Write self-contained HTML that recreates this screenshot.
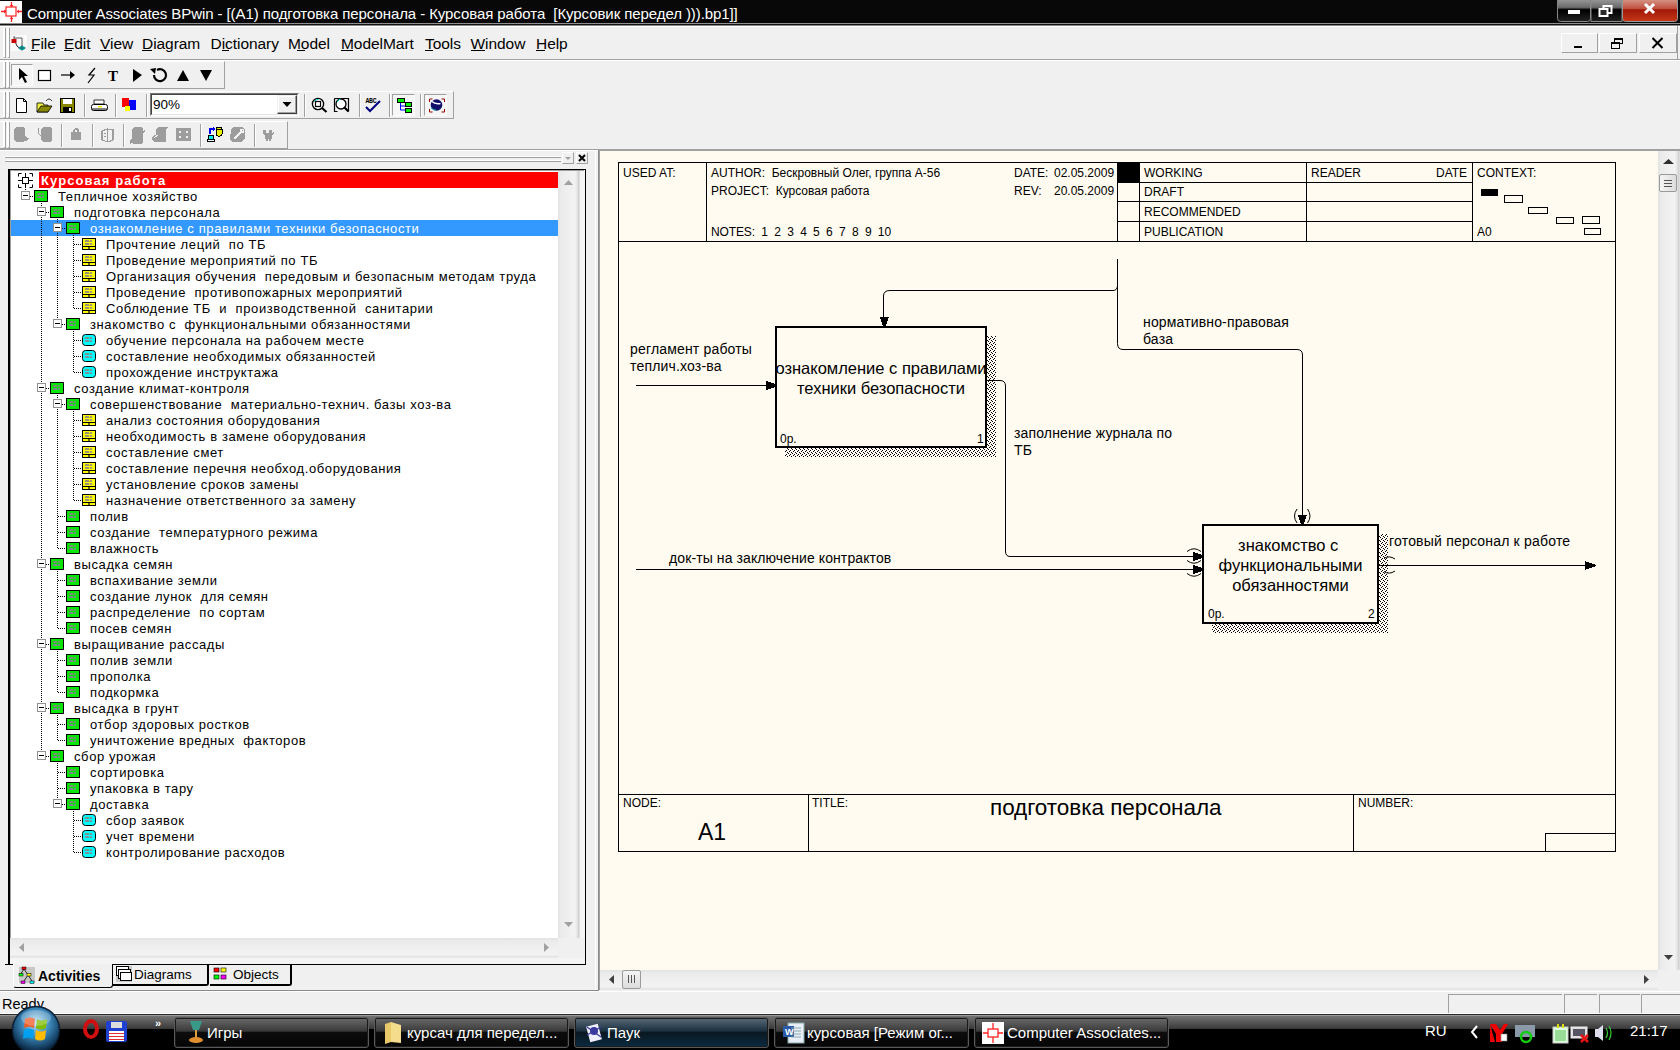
<!DOCTYPE html>
<html><head><meta charset="utf-8">
<style>
*{margin:0;padding:0;box-sizing:border-box}
html,body{width:1680px;height:1050px;overflow:hidden;background:#f0f0f0;font-family:"Liberation Sans",sans-serif}
.abs{position:absolute}
.t{position:absolute;white-space:pre;line-height:1}
</style></head><body>
<div class="abs" style="left:0;top:0;width:1680px;height:1050px;overflow:hidden">

<div class="abs" style="left:0;top:0;width:1680px;height:23px;background:#080808"></div>
<div class="abs" style="left:0;top:23px;width:1680px;height:1px;background:#909090"></div>
<div class="abs" style="left:0;top:24px;width:1680px;height:1px;background:#111"></div>
<div class="abs" style="left:0;top:25px;width:1680px;height:1px;background:#888"></div>
<div class="abs" style="left:0;top:26px;width:1680px;height:1px;background:#fff"></div>
<svg class="abs" style="left:0;top:0" width="23" height="23" viewBox="0 0 23 23">
<rect x="0" y="1" width="22" height="22" fill="#fff"/>
<rect x="6" y="7" width="10" height="9" fill="none" stroke="#f33" stroke-width="1.3"/>
<path d="M11.5 2v5M1 11.5h5M17 11.5h5M11.5 16v6" stroke="#f22" stroke-width="1.3"/>
<path d="M9.5 5l2 2 2-2zM4 9.5l2 2-2 2zM19 9.5l-2 2 2 2zM9.5 19l2-2 2 2z" fill="#f22"/>
</svg>
<div class="t" style="left:27px;top:5.5px;font-size:15px;letter-spacing:-0.08px;color:#fff">Computer Associates BPwin - [(A1) подготовка персонала - Курсовая работа  [Курсовик передел ))).bp1]]</div>
<svg class="abs" style="left:1556px;top:0" width="124" height="23" viewBox="0 0 124 23">
<defs>
<linearGradient id="cbg" x1="0" y1="0" x2="0" y2="1"><stop offset="0" stop-color="#a0a0a0"/><stop offset="0.4" stop-color="#6a6a6a"/><stop offset="0.5" stop-color="#000"/><stop offset="1" stop-color="#222"/></linearGradient>
<linearGradient id="cbr" x1="0" y1="0" x2="0" y2="1"><stop offset="0" stop-color="#d9a090"/><stop offset="0.45" stop-color="#c05040"/><stop offset="0.5" stop-color="#a01808"/><stop offset="1" stop-color="#c83818"/></linearGradient>
</defs>
<rect x="1.5" y="-2" width="33" height="23.5" rx="3" fill="url(#cbg)" stroke="#888" stroke-width="1"/>
<rect x="35" y="-2" width="31" height="23.5" fill="url(#cbg)" stroke="#888" stroke-width="1"/>
<rect x="66.5" y="-2" width="55" height="23.5" rx="3" fill="url(#cbr)" stroke="#999" stroke-width="1"/>
<rect x="12" y="10" width="12" height="4" fill="#fff"/>
<rect x="47.5" y="6" width="8" height="7" fill="none" stroke="#fff" stroke-width="2"/>
<rect x="43.5" y="9" width="8" height="7" fill="#2a2a2a" stroke="#fff" stroke-width="2"/>
<path d="M89 4l9 9M98 4l-9 9" stroke="#fff" stroke-width="3"/>
</svg>
<div class="abs" style="left:0;top:59px;width:1680px;height:1px;background:#a0a0a0"></div>
<div class="abs" style="left:3px;top:28px;width:3px;height:30px;border-left:2px solid #fff;border-right:1px solid #a0a0a0;border-bottom:1px solid #a0a0a0"></div><div class="abs" style="left:7px;top:28px;width:3px;height:30px;border-left:2px solid #fff;border-right:1px solid #a0a0a0;border-bottom:1px solid #a0a0a0"></div>
<svg class="abs" style="left:10px;top:34px" width="18" height="18" viewBox="0 0 18 18">
<rect x="1" y="1" width="16" height="16" fill="#fafafa"/>
<path d="M4 2v5M4 4h8v10" stroke="#333" stroke-width="0.8" fill="none"/>
<path d="M4 7q2 2 3 5q1 2 5 2" stroke="#222" stroke-width="1" fill="none"/>
<rect x="1.5" y="5" width="5" height="4" fill="#c00"/>
<ellipse cx="12" cy="14" rx="3" ry="2" fill="#0bb"/>
<path d="M8 14h8M12 11v6" stroke="#333" stroke-width="0.6"/>
</svg>
<div class="t" style="left:31px;top:35.5px;font-size:15.5px;letter-spacing:-0.05px;color:#000">File</div>
<div class="t" style="left:64px;top:35.5px;font-size:15.5px;letter-spacing:-0.05px;color:#000">Edit</div>
<div class="t" style="left:100px;top:35.5px;font-size:15.5px;letter-spacing:-0.05px;color:#000">View</div>
<div class="t" style="left:142px;top:35.5px;font-size:15.5px;letter-spacing:-0.05px;color:#000">Diagram</div>
<div class="t" style="left:210.5px;top:35.5px;font-size:15.5px;letter-spacing:-0.05px;color:#000">Dictionary</div>
<div class="t" style="left:288px;top:35.5px;font-size:15.5px;letter-spacing:-0.05px;color:#000">Model</div>
<div class="t" style="left:341px;top:35.5px;font-size:15.5px;letter-spacing:-0.05px;color:#000">ModelMart</div>
<div class="t" style="left:425px;top:35.5px;font-size:15.5px;letter-spacing:-0.05px;color:#000">Tools</div>
<div class="t" style="left:470.5px;top:35.5px;font-size:15.5px;letter-spacing:-0.05px;color:#000">Window</div>
<div class="t" style="left:536px;top:35.5px;font-size:15.5px;letter-spacing:-0.05px;color:#000">Help</div>
<div class="abs" style="left:31px;top:50px;width:8px;height:1px;background:#000"></div>
<div class="abs" style="left:64px;top:50px;width:8px;height:1px;background:#000"></div>
<div class="abs" style="left:100px;top:50px;width:10px;height:1px;background:#000"></div>
<div class="abs" style="left:142px;top:50px;width:10px;height:1px;background:#000"></div>
<div class="abs" style="left:222px;top:50px;width:7px;height:1px;background:#000"></div>
<div class="abs" style="left:297px;top:50px;width:8px;height:1px;background:#000"></div>
<div class="abs" style="left:341px;top:50px;width:12px;height:1px;background:#000"></div>
<div class="abs" style="left:425px;top:50px;width:8px;height:1px;background:#000"></div>
<div class="abs" style="left:471px;top:50px;width:14px;height:1px;background:#000"></div>
<div class="abs" style="left:536px;top:50px;width:9px;height:1px;background:#000"></div>
<div class="abs" style="left:1561px;top:33px;width:37px;height:20px;border:1px solid;border-color:#fff #a0a0a0 #a0a0a0 #fff;background:#f0f0f0"></div><svg class="abs" style="left:1561px;top:33px" width="37" height="20" viewBox="0 0 37 20"><rect x="13" y="13" width="8" height="2" fill="#000"/></svg>
<div class="abs" style="left:1599px;top:33px;width:38px;height:20px;border:1px solid;border-color:#fff #a0a0a0 #a0a0a0 #fff;background:#f0f0f0"></div><svg class="abs" style="left:1599px;top:33px" width="38" height="20" viewBox="0 0 38 20"><rect x="15.5" y="5.5" width="8" height="5" fill="none" stroke="#000" stroke-width="1"/><rect x="15.5" y="5.5" width="8" height="1.5" fill="#000"/><rect x="12.5" y="9.5" width="8" height="6" fill="#f0f0f0" stroke="#000" stroke-width="1"/><rect x="12.5" y="9.5" width="8" height="1.5" fill="#000"/></svg>
<div class="abs" style="left:1639px;top:33px;width:38px;height:20px;border:1px solid;border-color:#fff #a0a0a0 #a0a0a0 #fff;background:#f0f0f0"></div><svg class="abs" style="left:1639px;top:33px" width="38" height="20" viewBox="0 0 38 20"><path d="M13.5 5l10 10M23.5 5l-10 10" stroke="#000" stroke-width="2"/></svg>
<div class="abs" style="left:1677px;top:26px;width:1px;height:33px;background:#a0a0a0"></div>
<div class="abs" style="left:0;top:149px;width:1680px;height:1px;background:#a0a0a0"></div>
<div class="abs" style="left:0;top:150px;width:1680px;height:1px;background:#fff"></div>
<div class="abs" style="left:0;top:60px;width:1680px;height:1px;background:#fff"></div>
<div class="abs" style="left:0px;top:61px;width:225px;height:28px;border-right:1px solid #a0a0a0;border-bottom:1px solid #a0a0a0;border-top:1px solid #fff"></div>
<div class="abs" style="left:0px;top:91px;width:454px;height:28px;border-right:1px solid #a0a0a0;border-bottom:1px solid #a0a0a0;border-top:1px solid #fff"></div>
<div class="abs" style="left:0px;top:121px;width:288px;height:28px;border-right:1px solid #a0a0a0;border-bottom:1px solid #a0a0a0;border-top:1px solid #fff"></div>
<div class="abs" style="left:3px;top:62px;width:3px;height:26px;border-left:2px solid #fff;border-right:1px solid #a0a0a0;border-bottom:1px solid #a0a0a0"></div><div class="abs" style="left:7px;top:62px;width:3px;height:26px;border-left:2px solid #fff;border-right:1px solid #a0a0a0;border-bottom:1px solid #a0a0a0"></div>
<div class="abs" style="left:3px;top:92px;width:3px;height:26px;border-left:2px solid #fff;border-right:1px solid #a0a0a0;border-bottom:1px solid #a0a0a0"></div><div class="abs" style="left:7px;top:92px;width:3px;height:26px;border-left:2px solid #fff;border-right:1px solid #a0a0a0;border-bottom:1px solid #a0a0a0"></div>
<div class="abs" style="left:3px;top:122px;width:3px;height:26px;border-left:2px solid #fff;border-right:1px solid #a0a0a0;border-bottom:1px solid #a0a0a0"></div><div class="abs" style="left:7px;top:122px;width:3px;height:26px;border-left:2px solid #fff;border-right:1px solid #a0a0a0;border-bottom:1px solid #a0a0a0"></div>
<div class="abs" style="left:11px;top:64px;width:22px;height:22px;border:1px solid;border-color:#a0a0a0 #fff #fff #a0a0a0;background:#f6f6f6"></div>
<svg class="abs" style="left:0;top:60px" width="230" height="30" viewBox="0 0 230 30">
<path d="M19 8l0 12 3-3 3 6 2-1-3-6 4 0z" fill="#000"/>
<rect x="38.5" y="10.5" width="12" height="10" fill="#fff" stroke="#000" stroke-width="1.2"/>
<path d="M61 15h10" stroke="#000" stroke-width="1.2"/><path d="M70 11l5 4-5 4z" fill="#000"/>
<path d="M95 8l-6 7h5l-6 8" stroke="#000" stroke-width="1.2" fill="none"/>
<text x="108" y="21" font-family="Liberation Serif" font-size="15" font-weight="bold">T</text>
<path d="M133 9l9 6-9 7z" fill="#000"/>
<path d="M157 10a6 6 0 1 1-3 5" stroke="#000" stroke-width="2.2" fill="none"/><path d="M150 9l6-1-1 6z" fill="#000"/>
<path d="M177 21l6-11 6 11z" fill="#000"/>
<path d="M200 10l6 11 6-11z" fill="#000"/>
</svg>
<div class="abs" style="left:84px;top:94px;width:2px;height:23px;border-left:1px solid #a0a0a0;border-right:1px solid #fff"></div>
<div class="abs" style="left:115px;top:94px;width:2px;height:23px;border-left:1px solid #a0a0a0;border-right:1px solid #fff"></div>
<div class="abs" style="left:146px;top:94px;width:2px;height:23px;border-left:1px solid #a0a0a0;border-right:1px solid #fff"></div>
<div class="abs" style="left:304px;top:94px;width:2px;height:23px;border-left:1px solid #a0a0a0;border-right:1px solid #fff"></div>
<div class="abs" style="left:359px;top:94px;width:2px;height:23px;border-left:1px solid #a0a0a0;border-right:1px solid #fff"></div>
<div class="abs" style="left:389px;top:94px;width:2px;height:23px;border-left:1px solid #a0a0a0;border-right:1px solid #fff"></div>
<div class="abs" style="left:420px;top:94px;width:2px;height:23px;border-left:1px solid #a0a0a0;border-right:1px solid #fff"></div>
<div class="abs" style="left:392px;top:94px;width:23px;height:22px;border:1px solid;border-color:#a0a0a0 #fff #fff #a0a0a0;background:#f6f6f6"></div>
<div class="abs" style="left:424px;top:94px;width:23px;height:22px;border:1px solid;border-color:#a0a0a0 #fff #fff #a0a0a0;background:#f6f6f6"></div>
<svg class="abs" style="left:0;top:90px" width="460" height="30" viewBox="0 0 460 30">
<path d="M16.5 8.5h7l3 3v11h-10z" fill="#fff" stroke="#000" stroke-width="1"/><path d="M23.5 8.5v3h3" fill="none" stroke="#000" stroke-width="1"/>
<path d="M37 13h6l1 2h4v7h-11z" fill="#ee4" stroke="#000" stroke-width="0.8"/><path d="M37 22l4-6h11l-4 6z" fill="#880" stroke="#000" stroke-width="0.8"/><path d="M46 11q3-4 6 0" stroke="#000" fill="none" stroke-width="0.8"/>
<rect x="60.5" y="8.5" width="14" height="14" fill="#880" stroke="#000"/><rect x="63" y="9" width="9" height="5" fill="#fff"/><rect x="63" y="17" width="9" height="5" fill="#000"/><rect x="69" y="18" width="2" height="3" fill="#fff"/>
<path d="M94 10h10v4h-10z" fill="#fff" stroke="#000" stroke-width="0.8"/><rect x="91.5" y="14.5" width="16" height="6" rx="2" fill="#fff" stroke="#000"/><path d="M92 19h15" stroke="#000"/><rect x="98" y="16" width="4" height="1.5" fill="#ee0"/>
<rect x="122" y="8" width="7" height="9" fill="#f00"/><rect x="129" y="10" width="7" height="10" fill="#00f"/><rect x="125" y="16" width="5" height="5" fill="#ff0"/>
<circle cx="318" cy="14" r="5.6" fill="#fff" stroke="#000" stroke-width="1.4"/><path d="M314.5 11.5a4 4 0 0 1 4-2" stroke="#0dd" stroke-width="1" fill="none"/><rect x="315.5" y="11.5" width="5" height="5" fill="none" stroke="#000" stroke-width="1.2"/><path d="M322 18l4.5 4" stroke="#000" stroke-width="2.2"/>
<path d="M334.5 8.5h14v13M334.5 8.5v13h3" stroke="#000" stroke-width="1.2" fill="none"/><circle cx="341" cy="14" r="5" fill="#fff" stroke="#000" stroke-width="1.3"/><path d="M337.5 12a4 4 0 0 1 3-3" stroke="#0dd" stroke-width="1" fill="none"/><path d="M344 17l4.5 4.5" stroke="#000" stroke-width="2.2"/>
<text x="365.5" y="13" font-family="Liberation Mono" font-size="6.5" font-weight="bold" fill="#000" letter-spacing="-0.3">ABC</text><path d="M366 17l4 4l10-10" stroke="#000080" stroke-width="2" fill="none"/>
<path d="M400.5 13v7h5M400.5 16h5" stroke="#00f" fill="none" stroke-width="1"/><rect x="397.5" y="8.5" width="7" height="4" fill="#0e0" stroke="#000" stroke-width="1"/><rect x="405.5" y="12.5" width="6" height="4" fill="#0e0" stroke="#000" stroke-width="1"/><rect x="405.5" y="18.5" width="6" height="4" fill="#0e0" stroke="#000" stroke-width="1"/>
<path d="M429.5 12v-3h3M441.5 9h3v3M444.5 19v3h-3M432.5 22h-3v-3" stroke="#900" stroke-width="1" fill="none"/><circle cx="436.5" cy="15" r="5.8" fill="#10106a"/><path d="M432 11.5q3 3 8.5 2" stroke="#fff" stroke-width="1.5" fill="none"/><path d="M431 18q2 2 5 2" stroke="#2aa" stroke-width="1" fill="none"/>
</svg>
<div class="abs" style="left:150px;top:93px;width:149px;height:23px;border:1px solid;border-color:#7a7a7a #fff #fff #7a7a7a;background:#fff"></div>
<div class="abs" style="left:151px;top:94px;width:147px;height:21px;border:1px solid;border-color:#404040 #e3e3e3 #e3e3e3 #404040"></div>
<div class="t" style="left:153px;top:97.5px;font-size:13.5px;color:#000">90%</div>
<div class="abs" style="left:277px;top:95px;width:20px;height:19px;border:1px solid;border-color:#f0f0f0 #404040 #404040 #f0f0f0;background:#f0f0f0;box-shadow:inset -1px -1px 0 #a0a0a0, inset 1px 1px 0 #fff"></div>
<svg class="abs" style="left:277px;top:95px" width="20" height="19"><path d="M5.5 7h9l-4.5 5z" fill="#000"/></svg>
<div class="abs" style="left:61px;top:124px;width:2px;height:23px;border-left:1px solid #a0a0a0;border-right:1px solid #fff"></div>
<div class="abs" style="left:92px;top:124px;width:2px;height:23px;border-left:1px solid #a0a0a0;border-right:1px solid #fff"></div>
<div class="abs" style="left:123px;top:124px;width:2px;height:23px;border-left:1px solid #a0a0a0;border-right:1px solid #fff"></div>
<div class="abs" style="left:200px;top:124px;width:2px;height:23px;border-left:1px solid #a0a0a0;border-right:1px solid #fff"></div>
<div class="abs" style="left:254px;top:124px;width:2px;height:23px;border-left:1px solid #a0a0a0;border-right:1px solid #fff"></div>
<svg class="abs" style="left:0;top:120px" width="300" height="30" viewBox="0 0 300 30" shape-rendering="crispEdges">
<g fill="#9d9d9d">
<path d="M16 7h7l2 2v11l-2 2h-7l-2-2v-11z"/><path d="M25 15l2 3h2l-3 3h-1z"/>
<path d="M43 7h7l2 2v11l-2 2h-7l-2-2v-11z"/>
<path d="M71 12h10v8h-10z"/><path d="M73 12v-2l2-2h2l2 2v2h-2v-2h-2v2z"/>
<path d="M130 20l2-2v-9l2-2h7l2 2v2l2-2v2l-2 2v9l-2 2h-7l-2-1-2 1z"/>
<path d="M156 9l2-2h10l-2 3v12h-11l-3-2v-3l2-2h2z"/>
<path d="M176 8h15v13h-15z"/>
<path d="M231 9l2-2h9l3 3v8l-4 4h-9l-2-2z"/>
<path d="M263 10h3v3h3v-3h3v3l2-1v2l-2 1v4h-1v2h-2v-2h-1v2h-2v-2h-1v-4l-2-1v-2z"/>
</g>
<path d="M38 8v5l2 2h2" stroke="#9d9d9d" stroke-width="1" fill="none"/>
<rect x="75" y="10" width="2" height="2" fill="#f0f0f0"/>
<path d="M102 11l5-2 6 1v10l-5 2-6-2z" fill="#f0f0f0" stroke="#9d9d9d" stroke-width="1.2"/><path d="M107 9v12M104 13h2M104 16h2" stroke="#9d9d9d"/>
<path d="M154 18l4-3" stroke="#f0f0f0" stroke-width="1"/>
<rect x="179" y="11" width="2" height="2" fill="#f0f0f0"/><rect x="186" y="11" width="2" height="2" fill="#f0f0f0"/><rect x="179" y="16" width="2" height="2" fill="#f0f0f0"/><rect x="186" y="16" width="2" height="2" fill="#f0f0f0"/>
<path d="M234 19l8-8" stroke="#f4f4f4" stroke-width="1.5"/><circle cx="242" cy="11" r="2" fill="none" stroke="#f4f4f4"/>
<rect x="216" y="7" width="6" height="9" rx="2" fill="#ee0" stroke="#000" stroke-width="1"/><path d="M216 9h6" stroke="#000"/>
<path d="M210 14v-5h4" stroke="#0000ee" stroke-width="2" fill="none"/><path d="M213 7l3 2-3 2z" fill="#0000ee"/>
<rect x="208.5" y="15.5" width="5" height="4" fill="#0ee" stroke="#000" stroke-width="1"/><rect x="207.5" y="19.5" width="7" height="2" fill="#fff" stroke="#000" stroke-width="1"/>
</svg>
<div class="abs" style="left:5px;top:156px;width:556px;height:2px;border-top:1px solid #fff;border-bottom:1px solid #a0a0a0"></div>
<div class="abs" style="left:5px;top:160px;width:556px;height:2px;border-top:1px solid #fff;border-bottom:1px solid #a0a0a0"></div>
<div class="abs" style="left:562px;top:152px;width:12px;height:12px;border:1px solid;border-color:#fff #a0a0a0 #a0a0a0 #fff"></div>
<svg class="abs" style="left:562px;top:152px" width="12" height="12"><path d="M3 5h6l-3 3z" fill="#a0a0a0"/></svg>
<div class="abs" style="left:576px;top:152px;width:12px;height:12px;border:1px solid;border-color:#fff #a0a0a0 #a0a0a0 #fff"></div>
<svg class="abs" style="left:576px;top:152px" width="12" height="12"><path d="M3 3l6 6M9 3l-6 6" stroke="#000" stroke-width="2"/></svg>
<div class="abs" style="left:595px;top:151px;width:1px;height:839px;background:#fff"></div>
<div class="abs" style="left:598px;top:150px;width:1px;height:840px;background:#8a8a8a"></div>
<div class="abs" style="left:8px;top:169px;width:578px;height:796px;border:1px solid #000;border-left-width:2px"></div>
<div class="abs" style="left:10px;top:170px;width:574px;height:794px;border-top:1px solid #a0a0a0;border-left:1px solid #a0a0a0"></div>
<div class="abs" style="left:11px;top:171px;width:547px;height:767px;background:#fff"></div>
<div class="abs" style="left:558px;top:171px;width:22px;height:767px;background:linear-gradient(to right,#e2e2e2 0px,#ebebeb 3px,#efefef 10px,#f3f3f3 17px,#dcdcdc 20px,#c8c8c8 21px,#f0f0f0 22px)"></div>
<div class="abs" style="left:580px;top:171px;width:5px;height:767px;background:#f4f4f4"></div>
<svg class="abs" style="left:558px;top:171px" width="22" height="20"><path d="M6 14h9l-4.5-5z" fill="#a0a0a0"/></svg>
<svg class="abs" style="left:558px;top:915px" width="22" height="20"><path d="M6 7h9l-4.5 5z" fill="#a0a0a0"/></svg>
<div class="abs" style="left:10px;top:938px;width:548px;height:20px;background:linear-gradient(to bottom,#e2e2e2 0px,#ebebeb 3px,#efefef 10px,#f3f3f3 17px,#e0e0e0 19px,#f0f0f0 20px)"></div>
<div class="abs" style="left:10px;top:958px;width:575px;height:6px;background:#f4f4f4"></div>
<div class="abs" style="left:558px;top:938px;width:27px;height:20px;background:#f0f0f0"></div>
<svg class="abs" style="left:10px;top:938px" width="22" height="20"><path d="M14 5v9l-5-4.5z" fill="#a0a0a0"/></svg>
<svg class="abs" style="left:536px;top:938px" width="22" height="20"><path d="M8 5v9l5-4.5z" fill="#a0a0a0"/></svg>
<div class="abs" style="left:39px;top:172px;width:519px;height:16px;background:#ff0000"></div>
<div class="abs" style="left:11px;top:220px;width:547px;height:16px;background:#3399ff"></div>
<svg class="abs" style="left:0;top:0" width="560" height="940"><g stroke="#000" stroke-width="1" stroke-dasharray="1 1" fill="none"><path d="M26 196.5H34" /><path d="M42 212.5H50" /><path d="M58 228.5H66" /><path d="M74 244.5H82" /><path d="M74 260.5H82" /><path d="M74 276.5H82" /><path d="M74 292.5H82" /><path d="M74 308.5H82" /><path d="M58 324.5H66" /><path d="M74 340.5H82" /><path d="M74 356.5H82" /><path d="M74 372.5H82" /><path d="M42 388.5H50" /><path d="M58 404.5H66" /><path d="M74 420.5H82" /><path d="M74 436.5H82" /><path d="M74 452.5H82" /><path d="M74 468.5H82" /><path d="M74 484.5H82" /><path d="M74 500.5H82" /><path d="M58 516.5H66" /><path d="M58 532.5H66" /><path d="M58 548.5H66" /><path d="M42 564.5H50" /><path d="M58 580.5H66" /><path d="M58 596.5H66" /><path d="M58 612.5H66" /><path d="M58 628.5H66" /><path d="M42 644.5H50" /><path d="M58 660.5H66" /><path d="M58 676.5H66" /><path d="M58 692.5H66" /><path d="M42 708.5H50" /><path d="M58 724.5H66" /><path d="M58 740.5H66" /><path d="M42 756.5H50" /><path d="M58 772.5H66" /><path d="M58 788.5H66" /><path d="M58 804.5H66" /><path d="M74 820.5H82" /><path d="M74 836.5H82" /><path d="M74 852.5H82" /><path d="M25.5 187V196" /><path d="M41.5 203V756" /><path d="M57.5 219V324" /><path d="M73.5 235V308" /><path d="M73.5 331V372" /><path d="M57.5 395V548" /><path d="M73.5 411V500" /><path d="M57.5 571V628" /><path d="M57.5 651V692" /><path d="M57.5 715V740" /><path d="M57.5 763V804" /><path d="M73.5 811V852" /></g>
<g transform="translate(18 173)" fill="none" stroke="#000" stroke-width="1"><path d="M0.5 3.5v-3h3M11.5 0.5h3v3M14.5 11.5v3h-3M3.5 14.5h-3v-3"/><rect x="4.5" y="4.5" width="6" height="6"/><path d="M7.5 0v4M7.5 11v4M0 7.5h4M11 7.5h4"/></g>
<rect x="21.5" y="191.5" width="8" height="8" fill="#fff" stroke="#919191"/><path d="M23 195.5h5" stroke="#000"/>
<rect x="34.5" y="190.5" width="13" height="11" fill="#00e600" stroke="#000"/><path d="M37 195l1 -2l1 2l1 -2l1 2M42 195l1 -2l1 2M37 198l1 -2l1 2l1 -2l1 2M42 198l1 -2l1 2" stroke="#9a70a0" stroke-width="0.9" fill="none"/>
<rect x="37.5" y="207.5" width="8" height="8" fill="#fff" stroke="#919191"/><path d="M39 211.5h5" stroke="#000"/>
<rect x="50.5" y="206.5" width="13" height="11" fill="#00e600" stroke="#000"/><path d="M53 211l1 -2l1 2l1 -2l1 2M58 211l1 -2l1 2M53 214l1 -2l1 2l1 -2l1 2M58 214l1 -2l1 2" stroke="#9a70a0" stroke-width="0.9" fill="none"/>
<rect x="53.5" y="223.5" width="8" height="8" fill="#fff" stroke="#919191"/><path d="M55 227.5h5" stroke="#000"/>
<rect x="66.5" y="222.5" width="13" height="11" fill="#00e600" stroke="#000"/><path d="M69 227l1 -2l1 2l1 -2l1 2M74 227l1 -2l1 2M69 230l1 -2l1 2l1 -2l1 2M74 230l1 -2l1 2" stroke="#9a70a0" stroke-width="0.9" fill="none"/>
<rect x="82.5" y="238.5" width="13" height="11" fill="#ffff00" stroke="#000"/><path d="M83 246.5h12M89 246v3" stroke="#000" stroke-width="1.2"/><path d="M85 242l1 -2l1 2l1 -2l1 2M90 242l1 -2l1 2M85 245l1 -2l1 2l1 -2l1 2M90 245l1 -2l1 2" stroke="#8070a0" stroke-width="0.9" fill="none"/>
<rect x="82.5" y="254.5" width="13" height="11" fill="#ffff00" stroke="#000"/><path d="M83 262.5h12M89 262v3" stroke="#000" stroke-width="1.2"/><path d="M85 258l1 -2l1 2l1 -2l1 2M90 258l1 -2l1 2M85 261l1 -2l1 2l1 -2l1 2M90 261l1 -2l1 2" stroke="#8070a0" stroke-width="0.9" fill="none"/>
<rect x="82.5" y="270.5" width="13" height="11" fill="#ffff00" stroke="#000"/><path d="M83 278.5h12M89 278v3" stroke="#000" stroke-width="1.2"/><path d="M85 274l1 -2l1 2l1 -2l1 2M90 274l1 -2l1 2M85 277l1 -2l1 2l1 -2l1 2M90 277l1 -2l1 2" stroke="#8070a0" stroke-width="0.9" fill="none"/>
<rect x="82.5" y="286.5" width="13" height="11" fill="#ffff00" stroke="#000"/><path d="M83 294.5h12M89 294v3" stroke="#000" stroke-width="1.2"/><path d="M85 290l1 -2l1 2l1 -2l1 2M90 290l1 -2l1 2M85 293l1 -2l1 2l1 -2l1 2M90 293l1 -2l1 2" stroke="#8070a0" stroke-width="0.9" fill="none"/>
<rect x="82.5" y="302.5" width="13" height="11" fill="#ffff00" stroke="#000"/><path d="M83 310.5h12M89 310v3" stroke="#000" stroke-width="1.2"/><path d="M85 306l1 -2l1 2l1 -2l1 2M90 306l1 -2l1 2M85 309l1 -2l1 2l1 -2l1 2M90 309l1 -2l1 2" stroke="#8070a0" stroke-width="0.9" fill="none"/>
<rect x="53.5" y="319.5" width="8" height="8" fill="#fff" stroke="#919191"/><path d="M55 323.5h5" stroke="#000"/>
<rect x="66.5" y="318.5" width="13" height="11" fill="#00e600" stroke="#000"/><path d="M69 323l1 -2l1 2l1 -2l1 2M74 323l1 -2l1 2M69 326l1 -2l1 2l1 -2l1 2M74 326l1 -2l1 2" stroke="#9a70a0" stroke-width="0.9" fill="none"/>
<rect x="82.5" y="334.5" width="13" height="11" rx="3" fill="#00ffff" stroke="#000"/><path d="M85 339l1 -2l1 2l1 -2l1 2M90 339l1 -2l1 2M85 342l1 -2l1 2l1 -2l1 2M90 342l1 -2l1 2" stroke="#a07080" stroke-width="0.9" fill="none"/>
<rect x="82.5" y="350.5" width="13" height="11" rx="3" fill="#00ffff" stroke="#000"/><path d="M85 355l1 -2l1 2l1 -2l1 2M90 355l1 -2l1 2M85 358l1 -2l1 2l1 -2l1 2M90 358l1 -2l1 2" stroke="#a07080" stroke-width="0.9" fill="none"/>
<rect x="82.5" y="366.5" width="13" height="11" rx="3" fill="#00ffff" stroke="#000"/><path d="M85 371l1 -2l1 2l1 -2l1 2M90 371l1 -2l1 2M85 374l1 -2l1 2l1 -2l1 2M90 374l1 -2l1 2" stroke="#a07080" stroke-width="0.9" fill="none"/>
<rect x="37.5" y="383.5" width="8" height="8" fill="#fff" stroke="#919191"/><path d="M39 387.5h5" stroke="#000"/>
<rect x="50.5" y="382.5" width="13" height="11" fill="#00e600" stroke="#000"/><path d="M53 387l1 -2l1 2l1 -2l1 2M58 387l1 -2l1 2M53 390l1 -2l1 2l1 -2l1 2M58 390l1 -2l1 2" stroke="#9a70a0" stroke-width="0.9" fill="none"/>
<rect x="53.5" y="399.5" width="8" height="8" fill="#fff" stroke="#919191"/><path d="M55 403.5h5" stroke="#000"/>
<rect x="66.5" y="398.5" width="13" height="11" fill="#00e600" stroke="#000"/><path d="M69 403l1 -2l1 2l1 -2l1 2M74 403l1 -2l1 2M69 406l1 -2l1 2l1 -2l1 2M74 406l1 -2l1 2" stroke="#9a70a0" stroke-width="0.9" fill="none"/>
<rect x="82.5" y="414.5" width="13" height="11" fill="#ffff00" stroke="#000"/><path d="M83 422.5h12M89 422v3" stroke="#000" stroke-width="1.2"/><path d="M85 418l1 -2l1 2l1 -2l1 2M90 418l1 -2l1 2M85 421l1 -2l1 2l1 -2l1 2M90 421l1 -2l1 2" stroke="#8070a0" stroke-width="0.9" fill="none"/>
<rect x="82.5" y="430.5" width="13" height="11" fill="#ffff00" stroke="#000"/><path d="M83 438.5h12M89 438v3" stroke="#000" stroke-width="1.2"/><path d="M85 434l1 -2l1 2l1 -2l1 2M90 434l1 -2l1 2M85 437l1 -2l1 2l1 -2l1 2M90 437l1 -2l1 2" stroke="#8070a0" stroke-width="0.9" fill="none"/>
<rect x="82.5" y="446.5" width="13" height="11" fill="#ffff00" stroke="#000"/><path d="M83 454.5h12M89 454v3" stroke="#000" stroke-width="1.2"/><path d="M85 450l1 -2l1 2l1 -2l1 2M90 450l1 -2l1 2M85 453l1 -2l1 2l1 -2l1 2M90 453l1 -2l1 2" stroke="#8070a0" stroke-width="0.9" fill="none"/>
<rect x="82.5" y="462.5" width="13" height="11" fill="#ffff00" stroke="#000"/><path d="M83 470.5h12M89 470v3" stroke="#000" stroke-width="1.2"/><path d="M85 466l1 -2l1 2l1 -2l1 2M90 466l1 -2l1 2M85 469l1 -2l1 2l1 -2l1 2M90 469l1 -2l1 2" stroke="#8070a0" stroke-width="0.9" fill="none"/>
<rect x="82.5" y="478.5" width="13" height="11" fill="#ffff00" stroke="#000"/><path d="M83 486.5h12M89 486v3" stroke="#000" stroke-width="1.2"/><path d="M85 482l1 -2l1 2l1 -2l1 2M90 482l1 -2l1 2M85 485l1 -2l1 2l1 -2l1 2M90 485l1 -2l1 2" stroke="#8070a0" stroke-width="0.9" fill="none"/>
<rect x="82.5" y="494.5" width="13" height="11" fill="#ffff00" stroke="#000"/><path d="M83 502.5h12M89 502v3" stroke="#000" stroke-width="1.2"/><path d="M85 498l1 -2l1 2l1 -2l1 2M90 498l1 -2l1 2M85 501l1 -2l1 2l1 -2l1 2M90 501l1 -2l1 2" stroke="#8070a0" stroke-width="0.9" fill="none"/>
<rect x="66.5" y="510.5" width="13" height="11" fill="#00e600" stroke="#000"/><path d="M69 515l1 -2l1 2l1 -2l1 2M74 515l1 -2l1 2M69 518l1 -2l1 2l1 -2l1 2M74 518l1 -2l1 2" stroke="#9a70a0" stroke-width="0.9" fill="none"/>
<rect x="66.5" y="526.5" width="13" height="11" fill="#00e600" stroke="#000"/><path d="M69 531l1 -2l1 2l1 -2l1 2M74 531l1 -2l1 2M69 534l1 -2l1 2l1 -2l1 2M74 534l1 -2l1 2" stroke="#9a70a0" stroke-width="0.9" fill="none"/>
<rect x="66.5" y="542.5" width="13" height="11" fill="#00e600" stroke="#000"/><path d="M69 547l1 -2l1 2l1 -2l1 2M74 547l1 -2l1 2M69 550l1 -2l1 2l1 -2l1 2M74 550l1 -2l1 2" stroke="#9a70a0" stroke-width="0.9" fill="none"/>
<rect x="37.5" y="559.5" width="8" height="8" fill="#fff" stroke="#919191"/><path d="M39 563.5h5" stroke="#000"/>
<rect x="50.5" y="558.5" width="13" height="11" fill="#00e600" stroke="#000"/><path d="M53 563l1 -2l1 2l1 -2l1 2M58 563l1 -2l1 2M53 566l1 -2l1 2l1 -2l1 2M58 566l1 -2l1 2" stroke="#9a70a0" stroke-width="0.9" fill="none"/>
<rect x="66.5" y="574.5" width="13" height="11" fill="#00e600" stroke="#000"/><path d="M69 579l1 -2l1 2l1 -2l1 2M74 579l1 -2l1 2M69 582l1 -2l1 2l1 -2l1 2M74 582l1 -2l1 2" stroke="#9a70a0" stroke-width="0.9" fill="none"/>
<rect x="66.5" y="590.5" width="13" height="11" fill="#00e600" stroke="#000"/><path d="M69 595l1 -2l1 2l1 -2l1 2M74 595l1 -2l1 2M69 598l1 -2l1 2l1 -2l1 2M74 598l1 -2l1 2" stroke="#9a70a0" stroke-width="0.9" fill="none"/>
<rect x="66.5" y="606.5" width="13" height="11" fill="#00e600" stroke="#000"/><path d="M69 611l1 -2l1 2l1 -2l1 2M74 611l1 -2l1 2M69 614l1 -2l1 2l1 -2l1 2M74 614l1 -2l1 2" stroke="#9a70a0" stroke-width="0.9" fill="none"/>
<rect x="66.5" y="622.5" width="13" height="11" fill="#00e600" stroke="#000"/><path d="M69 627l1 -2l1 2l1 -2l1 2M74 627l1 -2l1 2M69 630l1 -2l1 2l1 -2l1 2M74 630l1 -2l1 2" stroke="#9a70a0" stroke-width="0.9" fill="none"/>
<rect x="37.5" y="639.5" width="8" height="8" fill="#fff" stroke="#919191"/><path d="M39 643.5h5" stroke="#000"/>
<rect x="50.5" y="638.5" width="13" height="11" fill="#00e600" stroke="#000"/><path d="M53 643l1 -2l1 2l1 -2l1 2M58 643l1 -2l1 2M53 646l1 -2l1 2l1 -2l1 2M58 646l1 -2l1 2" stroke="#9a70a0" stroke-width="0.9" fill="none"/>
<rect x="66.5" y="654.5" width="13" height="11" fill="#00e600" stroke="#000"/><path d="M69 659l1 -2l1 2l1 -2l1 2M74 659l1 -2l1 2M69 662l1 -2l1 2l1 -2l1 2M74 662l1 -2l1 2" stroke="#9a70a0" stroke-width="0.9" fill="none"/>
<rect x="66.5" y="670.5" width="13" height="11" fill="#00e600" stroke="#000"/><path d="M69 675l1 -2l1 2l1 -2l1 2M74 675l1 -2l1 2M69 678l1 -2l1 2l1 -2l1 2M74 678l1 -2l1 2" stroke="#9a70a0" stroke-width="0.9" fill="none"/>
<rect x="66.5" y="686.5" width="13" height="11" fill="#00e600" stroke="#000"/><path d="M69 691l1 -2l1 2l1 -2l1 2M74 691l1 -2l1 2M69 694l1 -2l1 2l1 -2l1 2M74 694l1 -2l1 2" stroke="#9a70a0" stroke-width="0.9" fill="none"/>
<rect x="37.5" y="703.5" width="8" height="8" fill="#fff" stroke="#919191"/><path d="M39 707.5h5" stroke="#000"/>
<rect x="50.5" y="702.5" width="13" height="11" fill="#00e600" stroke="#000"/><path d="M53 707l1 -2l1 2l1 -2l1 2M58 707l1 -2l1 2M53 710l1 -2l1 2l1 -2l1 2M58 710l1 -2l1 2" stroke="#9a70a0" stroke-width="0.9" fill="none"/>
<rect x="66.5" y="718.5" width="13" height="11" fill="#00e600" stroke="#000"/><path d="M69 723l1 -2l1 2l1 -2l1 2M74 723l1 -2l1 2M69 726l1 -2l1 2l1 -2l1 2M74 726l1 -2l1 2" stroke="#9a70a0" stroke-width="0.9" fill="none"/>
<rect x="66.5" y="734.5" width="13" height="11" fill="#00e600" stroke="#000"/><path d="M69 739l1 -2l1 2l1 -2l1 2M74 739l1 -2l1 2M69 742l1 -2l1 2l1 -2l1 2M74 742l1 -2l1 2" stroke="#9a70a0" stroke-width="0.9" fill="none"/>
<rect x="37.5" y="751.5" width="8" height="8" fill="#fff" stroke="#919191"/><path d="M39 755.5h5" stroke="#000"/>
<rect x="50.5" y="750.5" width="13" height="11" fill="#00e600" stroke="#000"/><path d="M53 755l1 -2l1 2l1 -2l1 2M58 755l1 -2l1 2M53 758l1 -2l1 2l1 -2l1 2M58 758l1 -2l1 2" stroke="#9a70a0" stroke-width="0.9" fill="none"/>
<rect x="66.5" y="766.5" width="13" height="11" fill="#00e600" stroke="#000"/><path d="M69 771l1 -2l1 2l1 -2l1 2M74 771l1 -2l1 2M69 774l1 -2l1 2l1 -2l1 2M74 774l1 -2l1 2" stroke="#9a70a0" stroke-width="0.9" fill="none"/>
<rect x="66.5" y="782.5" width="13" height="11" fill="#00e600" stroke="#000"/><path d="M69 787l1 -2l1 2l1 -2l1 2M74 787l1 -2l1 2M69 790l1 -2l1 2l1 -2l1 2M74 790l1 -2l1 2" stroke="#9a70a0" stroke-width="0.9" fill="none"/>
<rect x="53.5" y="799.5" width="8" height="8" fill="#fff" stroke="#919191"/><path d="M55 803.5h5" stroke="#000"/>
<rect x="66.5" y="798.5" width="13" height="11" fill="#00e600" stroke="#000"/><path d="M69 803l1 -2l1 2l1 -2l1 2M74 803l1 -2l1 2M69 806l1 -2l1 2l1 -2l1 2M74 806l1 -2l1 2" stroke="#9a70a0" stroke-width="0.9" fill="none"/>
<rect x="82.5" y="814.5" width="13" height="11" rx="3" fill="#00ffff" stroke="#000"/><path d="M85 819l1 -2l1 2l1 -2l1 2M90 819l1 -2l1 2M85 822l1 -2l1 2l1 -2l1 2M90 822l1 -2l1 2" stroke="#a07080" stroke-width="0.9" fill="none"/>
<rect x="82.5" y="830.5" width="13" height="11" rx="3" fill="#00ffff" stroke="#000"/><path d="M85 835l1 -2l1 2l1 -2l1 2M90 835l1 -2l1 2M85 838l1 -2l1 2l1 -2l1 2M90 838l1 -2l1 2" stroke="#a07080" stroke-width="0.9" fill="none"/>
<rect x="82.5" y="846.5" width="13" height="11" rx="3" fill="#00ffff" stroke="#000"/><path d="M85 851l1 -2l1 2l1 -2l1 2M90 851l1 -2l1 2M85 854l1 -2l1 2l1 -2l1 2M90 854l1 -2l1 2" stroke="#a07080" stroke-width="0.9" fill="none"/>
</svg>
<div class="t" style="left:41px;top:173.5px;font-size:13px;font-weight:bold;color:#fff;letter-spacing:1.1px">Курсовая работа</div>
<div class="t" style="left:58px;top:189.5px;font-size:13px;letter-spacing:0.6px;color:#000">Тепличное хозяйство</div>
<div class="t" style="left:74px;top:205.5px;font-size:13px;letter-spacing:0.6px;color:#000">подготовка персонала</div>
<div class="t" style="left:90px;top:221.5px;font-size:13px;letter-spacing:0.6px;color:#fff">ознакомление с правилами техники безопасности</div>
<div class="t" style="left:106px;top:237.5px;font-size:13px;letter-spacing:0.6px;color:#000">Прочтение леций  по ТБ</div>
<div class="t" style="left:106px;top:253.5px;font-size:13px;letter-spacing:0.6px;color:#000">Проведение мероприятий по ТБ</div>
<div class="t" style="left:106px;top:269.5px;font-size:13px;letter-spacing:0.6px;color:#000">Организация обучения  передовым и безопасным методам труда</div>
<div class="t" style="left:106px;top:285.5px;font-size:13px;letter-spacing:0.6px;color:#000">Проведение  противопожарных мероприятий</div>
<div class="t" style="left:106px;top:301.5px;font-size:13px;letter-spacing:0.6px;color:#000">Соблюдение ТБ  и  производственной  санитарии</div>
<div class="t" style="left:90px;top:317.5px;font-size:13px;letter-spacing:0.6px;color:#000">знакомство с  функциональными обязанностями</div>
<div class="t" style="left:106px;top:333.5px;font-size:13px;letter-spacing:0.6px;color:#000">обучение персонала на рабочем месте</div>
<div class="t" style="left:106px;top:349.5px;font-size:13px;letter-spacing:0.6px;color:#000">составление необходимых обязанностей</div>
<div class="t" style="left:106px;top:365.5px;font-size:13px;letter-spacing:0.6px;color:#000">прохождение инструктажа</div>
<div class="t" style="left:74px;top:381.5px;font-size:13px;letter-spacing:0.6px;color:#000">создание климат-контроля</div>
<div class="t" style="left:90px;top:397.5px;font-size:13px;letter-spacing:0.6px;color:#000">совершенствование  материально-технич. базы хоз-ва</div>
<div class="t" style="left:106px;top:413.5px;font-size:13px;letter-spacing:0.6px;color:#000">анализ состояния оборудования</div>
<div class="t" style="left:106px;top:429.5px;font-size:13px;letter-spacing:0.6px;color:#000">необходимость в замене оборудования</div>
<div class="t" style="left:106px;top:445.5px;font-size:13px;letter-spacing:0.6px;color:#000">составление смет</div>
<div class="t" style="left:106px;top:461.5px;font-size:13px;letter-spacing:0.6px;color:#000">составление перечня необход.оборудования</div>
<div class="t" style="left:106px;top:477.5px;font-size:13px;letter-spacing:0.6px;color:#000">установление сроков замены</div>
<div class="t" style="left:106px;top:493.5px;font-size:13px;letter-spacing:0.6px;color:#000">назначение ответственного за замену</div>
<div class="t" style="left:90px;top:509.5px;font-size:13px;letter-spacing:0.6px;color:#000">полив</div>
<div class="t" style="left:90px;top:525.5px;font-size:13px;letter-spacing:0.6px;color:#000">создание  температурного режима</div>
<div class="t" style="left:90px;top:541.5px;font-size:13px;letter-spacing:0.6px;color:#000">влажность</div>
<div class="t" style="left:74px;top:557.5px;font-size:13px;letter-spacing:0.6px;color:#000">высадка семян</div>
<div class="t" style="left:90px;top:573.5px;font-size:13px;letter-spacing:0.6px;color:#000">вспахивание земли</div>
<div class="t" style="left:90px;top:589.5px;font-size:13px;letter-spacing:0.6px;color:#000">создание лунок  для семян</div>
<div class="t" style="left:90px;top:605.5px;font-size:13px;letter-spacing:0.6px;color:#000">распределение  по сортам</div>
<div class="t" style="left:90px;top:621.5px;font-size:13px;letter-spacing:0.6px;color:#000">посев семян</div>
<div class="t" style="left:74px;top:637.5px;font-size:13px;letter-spacing:0.6px;color:#000">выращивание рассады</div>
<div class="t" style="left:90px;top:653.5px;font-size:13px;letter-spacing:0.6px;color:#000">полив земли</div>
<div class="t" style="left:90px;top:669.5px;font-size:13px;letter-spacing:0.6px;color:#000">прополка</div>
<div class="t" style="left:90px;top:685.5px;font-size:13px;letter-spacing:0.6px;color:#000">подкормка</div>
<div class="t" style="left:74px;top:701.5px;font-size:13px;letter-spacing:0.6px;color:#000">высадка в грунт</div>
<div class="t" style="left:90px;top:717.5px;font-size:13px;letter-spacing:0.6px;color:#000">отбор здоровых ростков</div>
<div class="t" style="left:90px;top:733.5px;font-size:13px;letter-spacing:0.6px;color:#000">уничтожение вредных  факторов</div>
<div class="t" style="left:74px;top:749.5px;font-size:13px;letter-spacing:0.6px;color:#000">сбор урожая</div>
<div class="t" style="left:90px;top:765.5px;font-size:13px;letter-spacing:0.6px;color:#000">сортировка</div>
<div class="t" style="left:90px;top:781.5px;font-size:13px;letter-spacing:0.6px;color:#000">упаковка в тару</div>
<div class="t" style="left:90px;top:797.5px;font-size:13px;letter-spacing:0.6px;color:#000">доставка</div>
<div class="t" style="left:106px;top:813.5px;font-size:13px;letter-spacing:0.6px;color:#000">сбор заявок</div>
<div class="t" style="left:106px;top:829.5px;font-size:13px;letter-spacing:0.6px;color:#000">учет времени</div>
<div class="t" style="left:106px;top:845.5px;font-size:13px;letter-spacing:0.6px;color:#000">контролирование расходов</div>
<div class="abs" style="left:5px;top:964px;width:581px;height:1px;background:#000"></div>
<div class="abs" style="left:13px;top:964px;width:100px;height:24px;background:#f0f0f0;border:1px solid #000;border-top:none;border-left-color:#fff;border-radius:0 0 3px 3px"></div>
<div class="abs" style="left:113px;top:965px;width:96px;height:21px;background:#f0f0f0;border-right:2px solid #000;border-bottom:2px solid #000;border-radius:0 0 3px 0"></div>
<div class="abs" style="left:210px;top:965px;width:82px;height:21px;background:#f0f0f0;border-right:2px solid #000;border-bottom:2px solid #000;border-radius:0 0 3px 0"></div>
<svg class="abs" style="left:0;top:960px" width="300" height="30" viewBox="0 0 300 30">
<rect x="19" y="7" width="16" height="16" fill="#c8c8c8"/>
<path d="M24 9l-4 6M24 9l4 6M28 15l-4 6M28 15l4 6" stroke="#000" stroke-width="0.8"/>
<rect x="22" y="7" width="4" height="2.5" fill="#f00" stroke="#000" stroke-width="0.5"/>
<rect x="19" y="13.5" width="4" height="2.5" fill="#0f0" stroke="#000" stroke-width="0.5"/>
<rect x="27" y="13.5" width="4" height="2.5" fill="#ff0" stroke="#000" stroke-width="0.5"/>
<rect x="21" y="21" width="4" height="2.5" fill="#f0f" stroke="#000" stroke-width="0.5"/>
<rect x="30" y="21" width="4" height="2.5" fill="#0ff" stroke="#000" stroke-width="0.5"/>
<rect x="116" y="6" width="16" height="16" fill="#c8c8c8"/>
<rect x="116.5" y="6.5" width="12" height="9" fill="#fff" stroke="#000"/><rect x="118.5" y="9.5" width="12" height="9" fill="#fff" stroke="#000"/><rect x="120.5" y="12.5" width="11" height="8" fill="#fff" stroke="#000"/>
<rect x="214" y="8" width="5" height="4" fill="#f00" stroke="#000" stroke-width="0.6"/><rect x="221" y="8" width="5" height="4" fill="#ff0" stroke="#000" stroke-width="0.6"/>
<rect x="214" y="15" width="5" height="4" fill="#0f0" stroke="#000" stroke-width="0.6"/><rect x="221" y="15" width="5" height="4" fill="#f0f" stroke="#000" stroke-width="0.6"/>
</svg>
<div class="t" style="left:38px;top:969px;font-size:14px;font-weight:bold;color:#000">Activities</div>
<div class="t" style="left:134px;top:968px;font-size:13.5px;color:#000">Diagrams</div>
<div class="t" style="left:233px;top:968px;font-size:13.5px;color:#000">Objects</div>
<div class="abs" style="left:599px;top:150px;width:1081px;height:1px;background:#a0a0a0"></div>
<div class="abs" style="left:599px;top:150px;width:1px;height:840px;background:#a0a0a0"></div>
<div class="abs" style="left:600px;top:151px;width:1058px;height:819px;background:#fffbf0"></div>
<div class="abs" style="left:1658px;top:151px;width:22px;height:819px;background:linear-gradient(to right,#e2e2e2 0px,#ebebeb 3px,#efefef 10px,#f3f3f3 17px,#dcdcdc 20px,#c8c8c8 21px,#f0f0f0 22px)"></div>
<svg class="abs" style="left:1658px;top:150px" width="22" height="20"><path d="M5 14h11l-5.5-5z" fill="#303030"/></svg>
<svg class="abs" style="left:1658px;top:948px" width="22" height="20"><path d="M6 7h9l-4.5 5z" fill="#404040"/></svg>
<div class="abs" style="left:1659px;top:174px;width:18px;height:18px;border:1px solid #9a9a9a;border-radius:2px;background:linear-gradient(to right,#f4f4f4,#dcdcdc)"></div>
<svg class="abs" style="left:1659px;top:174px" width="18" height="18"><path d="M5 6.5h8M5 9.5h8M5 12.5h8" stroke="#555" stroke-width="1"/></svg>
<div class="abs" style="left:600px;top:970px;width:1058px;height:20px;background:linear-gradient(to bottom,#e2e2e2 0px,#ebebeb 3px,#efefef 10px,#f3f3f3 17px,#e0e0e0 19px,#f0f0f0 20px)"></div>
<div class="abs" style="left:1658px;top:970px;width:22px;height:20px;background:#f0f0f0"></div>
<svg class="abs" style="left:600px;top:970px" width="22" height="20"><path d="M14 5v9l-5-4.5z" fill="#404040"/></svg>
<svg class="abs" style="left:1636px;top:970px" width="22" height="20"><path d="M8 5v9l5-4.5z" fill="#404040"/></svg>
<div class="abs" style="left:622px;top:970px;width:19px;height:19px;border:1px solid #9a9a9a;border-radius:2px;background:linear-gradient(#f4f4f4,#dcdcdc)"></div>
<svg class="abs" style="left:622px;top:970px" width="19" height="19"><path d="M6.5 5v8M9.5 5v8M12.5 5v8" stroke="#555" stroke-width="1"/></svg>
<svg class="abs" style="left:0;top:0" width="1680" height="1050" viewBox="0 0 1680 1050">
<defs><pattern id="shd" width="4" height="4" patternUnits="userSpaceOnUse"><rect x="3" y="0" width="1" height="1" fill="#000"/><rect x="0" y="1" width="1" height="1" fill="#000"/><rect x="2" y="2" width="1" height="1" fill="#000"/><rect x="1" y="3" width="1" height="1" fill="#000"/></pattern></defs>
<g shape-rendering="crispEdges" fill="none" stroke="#000" stroke-width="1">
<rect x="618.5" y="162.5" width="997" height="689"/>
<path d="M618 241.5H1616M618 794.5H1616"/>
<path d="M706.5 162V241M1117.5 162V241M1139.5 162V241M1306.5 162V241M1472.5 162V241"/>
<path d="M1117 182.5H1473M1117 201.5H1473M1117 221.5H1473"/>
<path d="M808.5 794V851M1353.5 794V851M1545.5 833V851M1545 833.5H1616"/>
</g>
<rect x="1117" y="162" width="22" height="20" fill="#000"/>
<rect x="1481" y="189" width="17" height="7" fill="#000"/>
<g fill="none" stroke="#000" stroke-width="1" shape-rendering="crispEdges">
<rect x="1504.5" y="195.5" width="18" height="7"/><rect x="1528.5" y="207.5" width="19" height="6"/><rect x="1556.5" y="217.5" width="17" height="6"/><rect x="1582.5" y="216.5" width="17" height="7"/><rect x="1584.5" y="228.5" width="16" height="6"/>
</g>
<rect x="785" y="336" width="211" height="121" fill="url(#shd)"/>
<rect x="1212" y="534" width="176" height="99" fill="url(#shd)"/>
<rect x="776" y="327" width="210" height="120" fill="#fffbf0" stroke="#000" stroke-width="2" shape-rendering="crispEdges"/>
<rect x="1203" y="525" width="175" height="98" fill="#fffbf0" stroke="#000" stroke-width="2" shape-rendering="crispEdges"/>
<g fill="none" stroke="#000" stroke-width="1">
<path d="M636 385.5H767" shape-rendering="crispEdges"/>
<path d="M1117.5 259V343.5Q1117.5 349.5 1123 349.5H1297Q1302.5 349.5 1302.5 355V516"/>
<path d="M1117.5 286Q1117 290.5 1113 290.5H890Q883.5 290.5 883.5 296V318"/>
<path d="M987 380.5H1000Q1005.5 380.5 1005.5 386V551Q1005.5 556.5 1010 556.5H1194"/>
<path d="M636 569.5H1194" shape-rendering="crispEdges"/>
<path d="M1379 565.5H1586" shape-rendering="crispEdges"/>
<path d="M1187 551.5Q1194 546 1201 551.5M1187 560.5Q1194 566 1201 560.5M1187 573.5Q1194 579 1201 573.5"/>
<path d="M1297 509Q1292 516 1297 523M1307.5 509Q1312.5 516 1307.5 523"/>
<path d="M1384 558.5Q1389 555 1395 559M1384 571.5Q1389 575 1395 571"/>
</g>
<g fill="#000" shape-rendering="crispEdges">
<path d="M766 381V390L775 387V384Z"/>
<path d="M880 317H889L886 326H883Z"/>
<path d="M1298 515H1307L1304 524H1301Z"/>
<path d="M1193 552V561L1202 558V555Z"/>
<path d="M1193 565V574L1202 571V568Z"/>
<path d="M1585 561V570L1596 566V565Z"/>
</g>
</svg>
<div class="t" style="left:623px;top:167px;font-size:12px;color:#000;">USED AT:</div>
<div class="t" style="left:711px;top:167px;font-size:12px;color:#000;">AUTHOR:  Бескровный Олег, группа А-56</div>
<div class="t" style="left:711px;top:185px;font-size:12px;color:#000;">PROJECT:  Курсовая работа</div>
<div class="t" style="left:711px;top:226px;font-size:12px;color:#000;letter-spacing:-0.13px">NOTES:  1  2  3  4  5  6  7  8  9  10</div>
<div class="t" style="left:1014px;top:167px;font-size:12px;color:#000;">DATE:</div>
<div class="t" style="left:1054px;top:167px;font-size:12px;color:#000;">02.05.2009</div>
<div class="t" style="left:1014px;top:185px;font-size:12px;color:#000;">REV:</div>
<div class="t" style="left:1054px;top:185px;font-size:12px;color:#000;">20.05.2009</div>
<div class="t" style="left:1144px;top:167px;font-size:12px;color:#000;">WORKING</div>
<div class="t" style="left:1144px;top:186px;font-size:12px;color:#000;">DRAFT</div>
<div class="t" style="left:1144px;top:206px;font-size:12px;color:#000;">RECOMMENDED</div>
<div class="t" style="left:1144px;top:226px;font-size:12px;color:#000;">PUBLICATION</div>
<div class="t" style="left:1311px;top:167px;font-size:12px;color:#000;">READER</div>
<div class="t" style="left:1436px;top:167px;font-size:12px;color:#000;">DATE</div>
<div class="t" style="left:1477px;top:167px;font-size:12px;color:#000;">CONTEXT:</div>
<div class="t" style="left:1477px;top:226px;font-size:12px;color:#000;">A0</div>
<div class="t" style="left:623px;top:797px;font-size:12px;color:#000;">NODE:</div>
<div class="t" style="left:812px;top:797px;font-size:12px;color:#000;">TITLE:</div>
<div class="t" style="left:1358px;top:797px;font-size:12px;color:#000;">NUMBER:</div>
<div class="t" style="left:698px;top:820.5px;font-size:23px;color:#000;">A1</div>
<div class="t" style="left:990px;top:797px;font-size:22.5px;color:#000;letter-spacing:-0.05px">подготовка персонала</div>
<div class="t" style="left:775px;top:358px;width:212px;text-align:center;font-size:16.5px;line-height:20px;color:#000;overflow:visible">ознакомление с правилами
техники безопасности</div>
<div class="t" style="left:1202px;top:535.3px;width:177px;text-align:center;font-size:16.5px;line-height:20px;color:#000">знакомство с 
функциональными
обязанностями</div>
<div class="t" style="left:780px;top:433px;font-size:12px;color:#000;">0р.</div>
<div class="t" style="left:977px;top:433px;font-size:12px;color:#000;">1</div>
<div class="t" style="left:1208px;top:608px;font-size:12px;color:#000;">0р.</div>
<div class="t" style="left:1368px;top:608px;font-size:12px;color:#000;">2</div>
<div class="t" style="left:630px;top:341px;font-size:14px;line-height:17px;letter-spacing:0.17px;color:#000">регламент работы
теплич.хоз-ва</div>
<div class="t" style="left:1143px;top:314px;font-size:14px;line-height:17px;letter-spacing:0.15px;color:#000">нормативно-правовая
база</div>
<div class="t" style="left:1014px;top:425px;font-size:14px;line-height:17px;letter-spacing:0.15px;color:#000">заполнение журнала по
ТБ</div>
<div class="t" style="left:669px;top:551px;font-size:14px;color:#000;letter-spacing:0.1px">док-ты на заключение контрактов</div>
<div class="t" style="left:1389px;top:534px;font-size:14px;color:#000;letter-spacing:0.2px">готовый персонал к работе</div>
<div class="abs" style="left:0;top:990px;width:599px;height:1px;background:#8a8a8a"></div>
<div class="abs" style="left:0;top:991px;width:1680px;height:1px;background:#fff"></div>
<div class="t" style="left:2px;top:997px;font-size:14.5px;color:#000">Ready</div>
<div class="abs" style="left:1448px;top:994px;width:114px;height:20px;border-top:1px solid #a0a0a0;border-left:1px solid #a0a0a0"></div>
<div class="abs" style="left:1564px;top:994px;width:33px;height:20px;border-top:1px solid #a0a0a0;border-left:1px solid #a0a0a0"></div>
<div class="abs" style="left:1599px;top:994px;width:41px;height:20px;border-top:1px solid #a0a0a0;border-left:1px solid #a0a0a0"></div>
<div class="abs" style="left:1641px;top:994px;width:39px;height:20px;border-top:1px solid #a0a0a0;border-left:1px solid #a0a0a0"></div>
<div class="abs" style="left:0;top:1013px;width:1680px;height:1px;background:#fff"></div>
<div class="abs" style="left:0;top:1014px;width:1680px;height:36px;background:linear-gradient(#2a2a2a 0px,#2a2a2a 1px,#9a9a9a 1px,#9a9a9a 2px,#747474 2px,#3a3a3a 14.5px,#000 15px,#000 36px)"></div>
<svg class="abs" style="left:8px;top:1005px" width="56" height="45" viewBox="0 0 56 45">
<defs><radialGradient id="orb" cx="0.5" cy="0.35" r="0.6"><stop offset="0" stop-color="#bfe3f5"/><stop offset="0.5" stop-color="#3a86b8"/><stop offset="1" stop-color="#0a2a48"/></radialGradient></defs>
<circle cx="28" cy="25" r="23.5" fill="url(#orb)" stroke="#0b2035" stroke-width="1.5"/>
<path d="M17 14q5-3 10 0l-1 9q-5-3-10 0z" fill="#f05a22"/>
<path d="M29 14q5 3 10 0l-1 9q-5 3-10 0z" fill="#7cbb00"/>
<path d="M16 25q5-3 10 0l-1 9q-5-3-10 0z" fill="#00a1f1"/>
<path d="M28 25q5 3 10 0l-1 9q-5 3-10 0z" fill="#ffbb00"/>
<ellipse cx="28" cy="13" rx="15" ry="8" fill="#fff" opacity="0.25"/>
</svg>
<svg class="abs" style="left:78px;top:1018px" width="90" height="28" viewBox="0 0 90 28">
<ellipse cx="13" cy="11" rx="6" ry="8" fill="none" stroke="#d01010" stroke-width="4"/>
<rect x="28" y="3" width="21" height="21" rx="2" fill="#2040d0"/><rect x="33" y="4" width="11" height="6" fill="#ddd"/><rect x="31" y="13" width="15" height="10" fill="#fff"/><path d="M31 15.5h15M31 18.5h15M31 21.5h15" stroke="#e03030" stroke-width="1.2"/>
<text x="77" y="9" font-family="Liberation Sans" font-size="11" font-weight="bold" fill="#fff">»</text>
</svg>
<div class="abs" style="left:174px;top:1017px;width:195px;height:31px;border:1px solid #5a5a5a;border-radius:3px;background:linear-gradient(#6a6a6a 0%,#3a3a3a 45%,#0c0c0c 50%,#050505 100%);box-shadow:inset 0 0 0 1px #1a1a1a"></div><div class="t" style="left:207px;top:1025px;font-size:15px;color:#fff">Игры</div><svg class="abs" style="left:185px;top:1019px" width="22" height="26"><path d="M5 2h12l-3 9h-6z" fill="#3a9a8a"/><rect x="10" y="11" width="2" height="8" fill="#dca040"/><ellipse cx="11" cy="21" rx="7" ry="3" fill="#e09030"/></svg>
<div class="abs" style="left:374px;top:1017px;width:195px;height:31px;border:1px solid #5a5a5a;border-radius:3px;background:linear-gradient(#6a6a6a 0%,#3a3a3a 45%,#0c0c0c 50%,#050505 100%);box-shadow:inset 0 0 0 1px #1a1a1a"></div><div class="t" style="left:407px;top:1025px;font-size:15px;color:#fff">курсач для передел...</div><svg class="abs" style="left:383px;top:1021px" width="20" height="24"><path d="M2 3l6-2v20l-6 2z" fill="#e8c868"/><path d="M8 1l10 3v18l-10-1z" fill="#f4dc8c"/></svg>
<div class="abs" style="left:574px;top:1017px;width:195px;height:31px;border:1px solid #5a5a5a;border-radius:3px;background:linear-gradient(#5a6a78 0%,#1a3040 45%,#0a1822 50%,#0a2a40 100%);box-shadow:inset 0 0 0 1px #1a1a1a"></div><div class="t" style="left:607px;top:1025px;font-size:15px;color:#fff">Паук</div><svg class="abs" style="left:583px;top:1019px" width="22" height="26"><rect x="5" y="6" width="12" height="16" fill="#eef" transform="rotate(-15 11 14)"/><circle cx="11" cy="12" r="4" fill="#3a3aa0"/><path d="M4 8l14 10M4 16l14-8" stroke="#3a3aa0" stroke-width="1.2"/></svg>
<div class="abs" style="left:774px;top:1017px;width:195px;height:31px;border:1px solid #5a5a5a;border-radius:3px;background:linear-gradient(#6a6a6a 0%,#3a3a3a 45%,#0c0c0c 50%,#050505 100%);box-shadow:inset 0 0 0 1px #1a1a1a"></div><div class="t" style="left:807px;top:1025px;font-size:15px;color:#fff">курсовая [Режим ог...</div><svg class="abs" style="left:782px;top:1021px" width="24" height="24"><rect x="6" y="2" width="16" height="20" fill="#e8eef8" stroke="#8aa" stroke-width="1"/><rect x="1" y="5" width="11" height="11" fill="#2a5aa8"/><path d="M9 7h10M9 10h10M9 13h10M9 16h10" stroke="#8aa"/><text x="3" y="14" font-size="9" fill="#fff" font-weight="bold">W</text></svg>
<div class="abs" style="left:974px;top:1017px;width:195px;height:31px;border:1px solid #5a5a5a;border-radius:3px;background:linear-gradient(#6a6a6a 0%,#3a3a3a 45%,#0c0c0c 50%,#050505 100%);box-shadow:inset 0 0 0 1px #1a1a1a"></div><div class="t" style="left:1007px;top:1025px;font-size:15px;color:#fff">Computer Associates...</div><svg class="abs" style="left:981px;top:1021px" width="24" height="24"><rect x="1" y="1" width="22" height="22" fill="#fff"/><rect x="7" y="8" width="10" height="8" fill="none" stroke="#f22" stroke-width="1.3"/><path d="M12 2v6M2 12h5M17 12h5M12 16v6" stroke="#f22" stroke-width="1.3"/></svg>
<div class="t" style="left:1425px;top:1023px;font-size:15px;color:#fff">RU</div>
<svg class="abs" style="left:1460px;top:1018px" width="180" height="28" viewBox="0 0 180 28">
<path d="M17 8l-5 6 5 6" stroke="#fff" stroke-width="2" fill="none"/>
<path d="M30 6h6l4 6 4-6h4l-6 10v8h-6v-8z" fill="#e00"/><path d="M30 6v18h5" fill="#e00"/><rect x="41" y="16" width="6" height="7" fill="#fff" stroke="#888" stroke-width="0.6"/>
<rect x="55" y="7" width="20" height="12" fill="#8a9aa8"/><circle cx="66" cy="19" r="5" fill="none" stroke="#1c1" stroke-width="2.5"/>
<rect x="93" y="9" width="15" height="16" fill="#dfd" stroke="#ccc"/><rect x="97" y="6" width="2" height="4" fill="#dd0"/><rect x="102" y="6" width="2" height="4" fill="#dd0"/><rect x="95" y="12" width="11" height="11" fill="#9d9"/>
<rect x="111" y="9" width="16" height="11" fill="#ddd" stroke="#eee"/><rect x="113" y="11" width="12" height="7" fill="#556"/><path d="M121 17l7 7M128 17l-7 7" stroke="#e11" stroke-width="2.5"/>
<path d="M135 11h3l5-4v16l-5-4h-3z" fill="#dde"/><path d="M146 10q3 5 0 10M149 8q4 7 0 14" stroke="#3c3" fill="none" stroke-width="1.2"/>
</svg>
<div class="t" style="left:1630px;top:1023px;font-size:15px;color:#fff">21:17</div>
</div></body></html>
